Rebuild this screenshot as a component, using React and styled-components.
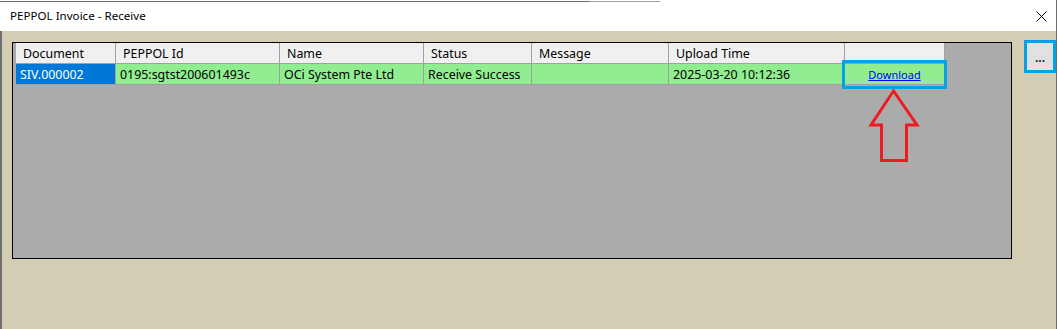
import React from "react";
import styled, { createGlobalStyle } from "styled-components";

const GlobalStyle = createGlobalStyle`
  html, body {
    margin: 0;
    padding: 0;
    background: #ffffff;
    overflow: hidden;
  }
  body {
    font-family: "Noto Sans", "Liberation Sans", sans-serif;
    font-size: 12px;
    color: #000;
  }
`;

const Window = styled.div`
  width: 1057px;
  height: 329px;
  display: flex;
  flex-direction: column;
  border-right: 1px solid #6e6e6e;
  box-sizing: border-box;
`;

const TopEdge = styled.div`
  height: 2px;
  display: flex;
  align-items: flex-start;
`;

const EdgeLine = styled.div`
  width: ${(p) => p.$w}px;
  height: 1px;
  margin-top: 1px;
  background: ${(p) => p.$c};
`;

const TitleBar = styled.div`
  height: 29px;
  display: flex;
  align-items: center;
  justify-content: space-between;
  padding: 0 9px 0 10px;
  background: #ffffff;
`;

const Title = styled.span`
  font-size: 11.6px;
  padding-bottom: 2px;
`;

const CloseIcon = styled.svg`
  width: 11px;
  height: 11px;
  margin-bottom: 1px;
`;

const Body = styled.div`
  flex: 1;
  display: flex;
  align-items: flex-start;
  gap: 12px;
  padding: 9px 0 0 10px;
  background: #d3cdb3;
  border-left: 2px solid #6e6e6e;
`;

const Grid = styled.div`
  position: relative;
  margin-top: 2px;
  width: 1000px;
  height: 217px;
  box-sizing: border-box;
  border: 1px solid #000;
  background: #ababab;
  padding-left: 3px;
  font-size: 12.4px;
`;

const Row = styled.div`
  display: flex;
  height: ${(p) => (p.$header ? 20 : 22)}px;
`;

const HeadCell = styled.div`
  width: ${(p) => p.$w}px;
  box-sizing: border-box;
  background: #f0f0f0;
  border-right: 1px solid #a0a0a0;
  padding: 1px 0 0 7px;
  display: flex;
  align-items: center;
  white-space: nowrap;
  overflow: hidden;
`;

const Cell = styled.div`
  position: relative;
  width: ${(p) => p.$w}px;
  box-sizing: border-box;
  background: ${(p) => (p.$selected ? "#0078d7" : "#90ee90")};
  color: ${(p) => (p.$selected ? "#ffffff" : "#000000")};
  border-top: 1px solid #a0a0a0;
  border-bottom: 1px solid #a0a0a0;
  border-right: 1px solid #a0a0a0;
  padding: 1px 0 0 4px;
  display: flex;
  align-items: center;
  justify-content: ${(p) => (p.$center ? "center" : "flex-start")};
  white-space: nowrap;
  overflow: visible;
`;

const Highlight = styled.div`
  position: absolute;
  left: -3px;
  right: -3px;
  top: -4px;
  bottom: -5px;
  border: 3px solid #00a2e8;
  pointer-events: none;
`;

const Link = styled.a`
  font-size: 11px;
  color: #0000ff;
  text-decoration: underline;
  margin-left: -4px;
  cursor: pointer;
`;

const Arrow = styled.svg`
  position: absolute;
  left: 852px;
  top: 43px;
  width: 58px;
  height: 80px;
`;

const SideFrame = styled.div`
  width: 32px;
  height: 33px;
  box-sizing: border-box;
  border: 3px solid #00a2e8;
  display: flex;
`;

const SideButton = styled.button`
  flex: 1;
  border: none;
  margin: 0;
  padding: 0 0 6px 0;
  background: #e1e1e1;
  font-family: "Noto Sans", "Liberation Sans", sans-serif;
  font-size: 12px;
  font-weight: bold;
  color: #1a2a3a;
  display: flex;
  align-items: flex-end;
  justify-content: center;
  line-height: 1;
`;

const columns = [
  { name: "Document", w: 100 },
  { name: "PEPPOL Id", w: 164 },
  { name: "Name", w: 144 },
  { name: "Status", w: 108 },
  { name: "Message", w: 137 },
  { name: "Upload Time", w: 176 },
  { name: "", w: 100 },
];

const record = [
  "SIV.000002",
  "0195:sgtst200601493c",
  "OCi System Pte Ltd",
  "Receive Success",
  "",
  "2025-03-20 10:12:36",
];

export default function App() {
  return (
    <>
      <GlobalStyle />
      <Window>
        <TopEdge>
          <EdgeLine $w={590} $c="#6e6e6e" />
          <EdgeLine $w={70} $c="#a0a0a0" />
        </TopEdge>
        <TitleBar>
          <Title>PEPPOL Invoice - Receive</Title>
          <CloseIcon viewBox="0 0 11 11">
            <path d="M0.5 0.5 L10.5 10.5 M10.5 0.5 L0.5 10.5" stroke="#000" strokeWidth="1" />
          </CloseIcon>
        </TitleBar>
        <Body>
          <Grid>
            <Row $header>
              {columns.map((c, i) => (
                <HeadCell key={i} $w={c.w}>
                  {c.name}
                </HeadCell>
              ))}
            </Row>
            <Row>
              {record.map((v, i) => (
                <Cell key={i} $w={columns[i].w} $selected={i === 0}>
                  {v}
                </Cell>
              ))}
              <Cell $w={columns[6].w} $center>
                <Link>Download</Link>
                <Highlight />
              </Cell>
            </Row>
            <Arrow viewBox="0 0 58 80">
              <polygon
                points="28.5,5 6,39 16.5,39 16.5,74.5 41.5,74.5 41.5,39 52,39"
                fill="none"
                stroke="#ed1c24"
                strokeWidth="3"
              />
            </Arrow>
          </Grid>
          <SideFrame>
            <SideButton>...</SideButton>
          </SideFrame>
        </Body>
      </Window>
    </>
  );
}
